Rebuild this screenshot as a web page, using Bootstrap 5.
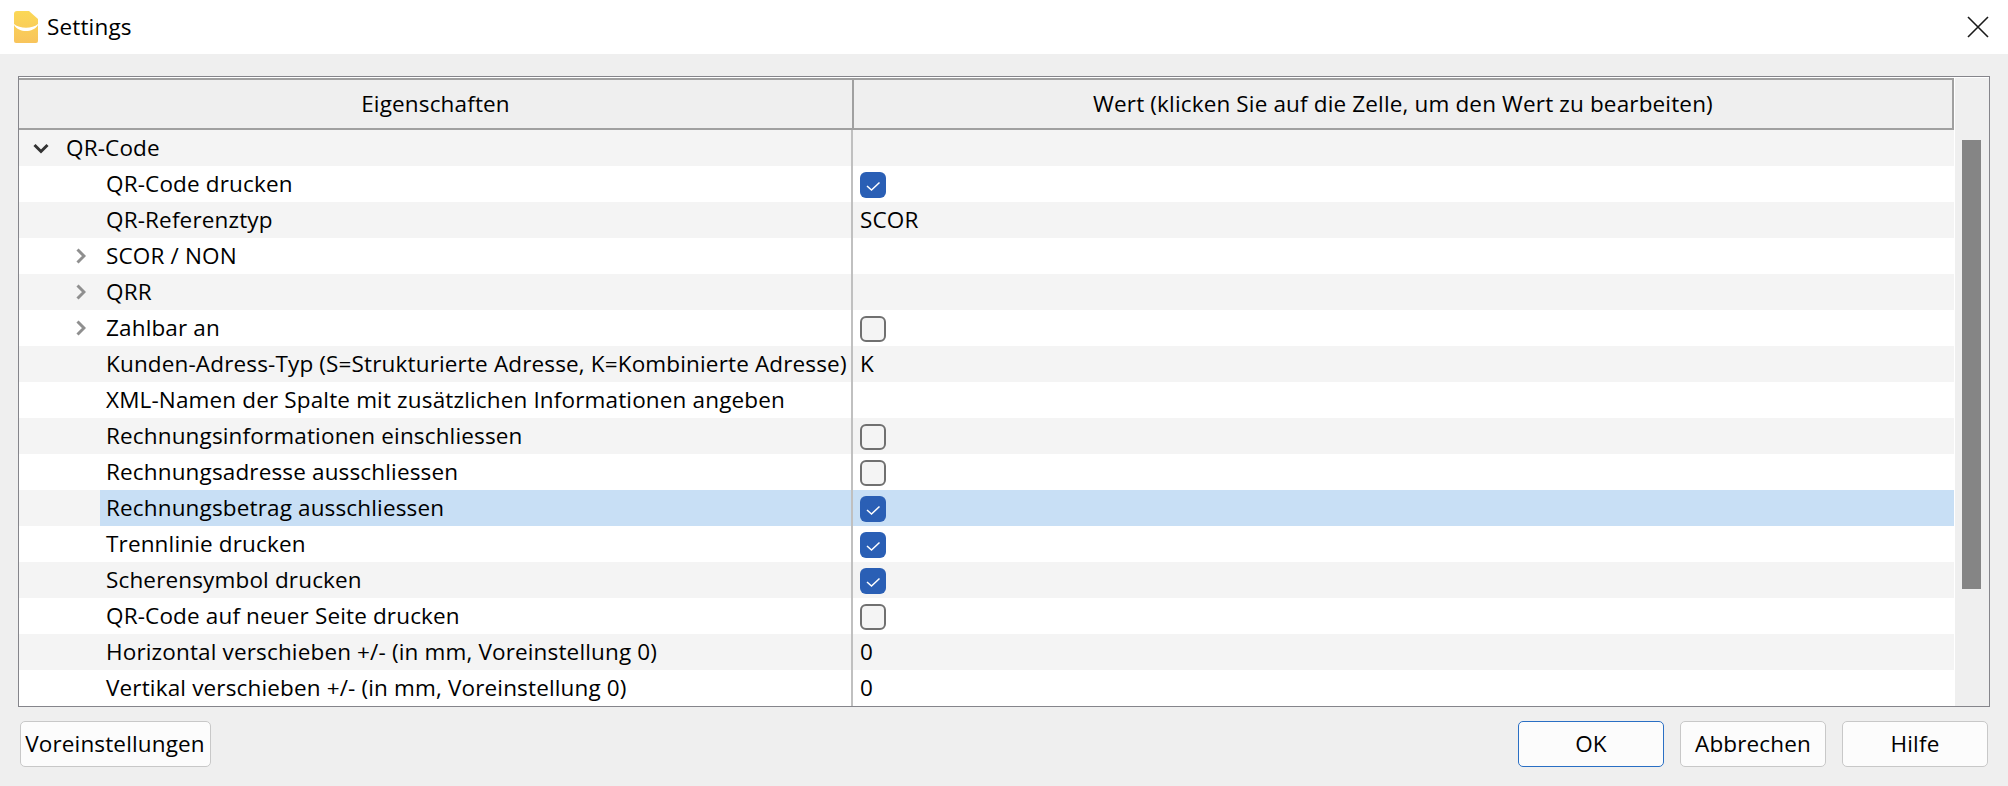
<!DOCTYPE html>
<html lang="de"><head><meta charset="utf-8"><title>Settings</title>
<link href="https://cdn.jsdelivr.net/npm/bootstrap@5.3.0/dist/css/bootstrap.min.css" rel="stylesheet">
<style>
html,body{height:786px;overflow:hidden}
body{background:#efefef;font-family:"Open Sans","Noto Sans","Liberation Sans",sans-serif;font-size:22.5px;letter-spacing:.15px;color:#000}
.titlebar{height:54px;background:#fff;padding-left:14px}
.titlebar .ttl{margin-left:9px}
.closex{margin-right:19px}
.frame{margin:22px 18px 0;height:631px;border:1px solid #85858b;padding-top:1px;background:#fff}
.mainpart{width:1935px}
.headrow{height:52px;background:#efefef;border:solid #a0a0a0;border-width:2px 2px 2px 0}
.hcell1{width:835px;border-right:2px solid #a0a0a0}
.datarow{height:36px;line-height:35px;background:#fff}
.datarow.alt{background:#f4f4f4}
.lab{width:832px;flex:none;white-space:nowrap}
.val{flex:1;border-left:2px solid #c0c0c0;padding-left:7px;height:36px}
.twisty{width:47px;flex:none}
.twisty.deep{width:87px}
.twisty.l0{width:47px;padding-left:14px}
.twisty.l1{width:87px;padding-left:57px}
.twisty svg{display:block;margin-top:13px}
.twisty.l1 svg{margin-top:10px}
.sel .labtext{background:#c8dff5;flex:1;padding-left:6px}
.sel{background:#f4f4f4}
.sel .val{background:#c8dff5}
.sel .twisty.deep{width:81px}
.cbx{width:26px;height:26px;border-radius:6px;display:block;margin-top:6px}
.cbx svg{display:block}
.cbx.on{background:#2a5fb5}
.cbx.off{background:#f4f4f4;border:2px solid #707070}
.scrollcol{flex:1;background:#efefef;margin-left:1px;padding:62px 8px 0 7px}
.thumb{height:449px;background:#858585}
.footrow{margin:14px 20px 0 19.5px}
.wbtn{height:46px;width:146px;background:#fcfcfc;border:1px solid #c8c8c8;border-radius:5px;padding:0;font-size:22.5px;letter-spacing:.15px;color:#000;line-height:1}
.wbtn.wide{width:191px}
.wbtn.dflt{border:1.5px solid #2a6fc4}
</style></head>
<body>
<div class="titlebar d-flex align-items-center justify-content-between">
  <div class="d-flex align-items-center">
    <svg width="24" height="32" viewBox="0 0 24 32"><defs><linearGradient id="g" x1="0" y1="0" x2="0" y2="1"><stop offset="0" stop-color="#fbd856"/><stop offset="1" stop-color="#f8c45c"/></linearGradient></defs><path d="M3 0h12l9 8v22a2 2 0 0 1-2 2H2a2 2 0 0 1-2-2V3a3 3 0 0 1 3-3z" fill="url(#g)"/><path d="M0 13c6 5 18 5 24 0v1c-5 8-19 8-24 0z" fill="#fff"/></svg>
    <span class="ttl">Settings</span>
  </div>
  <svg class="closex" width="22" height="22" viewBox="0 0 22 22"><path d="M1 1l20 20M21 1L1 21" stroke="#1a1a1a" stroke-width="1.6" fill="none"/></svg>
</div>
<div class="frame d-flex">
  <div class="mainpart">
    <div class="headrow d-flex text-center">
      <div class="hcell1 d-flex align-items-center justify-content-center">Eigenschaften</div>
      <div class="flex-grow-1 d-flex align-items-center justify-content-center">Wert (klicken Sie auf die Zelle, um den Wert zu bearbeiten)</div>
    </div>
    <div class="datarow alt d-flex"><div class="lab d-flex"><div class="twisty l0"><svg width="16" height="11" viewBox="0 0 16 11"><path d="M1.500 2L8 8.500 14.500 2" fill="none" stroke="#333" stroke-width="3"/></svg></div><div>QR-Code</div></div><div class="val"></div></div>
    <div class="datarow d-flex"><div class="lab d-flex"><div class="twisty deep"></div><div>QR-Code drucken</div></div><div class="val"><span class="cbx on"><svg width="26" height="26" viewBox="0 0 26 26"><path d="M7 14l4.500 4 8-7.500" fill="none" stroke="#fff" stroke-width="1.500"/></svg></span></div></div>
    <div class="datarow alt d-flex"><div class="lab d-flex"><div class="twisty deep"></div><div>QR-Referenztyp</div></div><div class="val">SCOR</div></div>
    <div class="datarow d-flex"><div class="lab d-flex"><div class="twisty l1"><svg width="10" height="16" viewBox="0 0 10 16"><path d="M1.500 1.500L8 8l-6.500 6.500" fill="none" stroke="#8f8f8f" stroke-width="3"/></svg></div><div>SCOR / NON</div></div><div class="val"></div></div>
    <div class="datarow alt d-flex"><div class="lab d-flex"><div class="twisty l1"><svg width="10" height="16" viewBox="0 0 10 16"><path d="M1.500 1.500L8 8l-6.500 6.500" fill="none" stroke="#8f8f8f" stroke-width="3"/></svg></div><div>QRR</div></div><div class="val"></div></div>
    <div class="datarow d-flex"><div class="lab d-flex"><div class="twisty l1"><svg width="10" height="16" viewBox="0 0 10 16"><path d="M1.500 1.500L8 8l-6.500 6.500" fill="none" stroke="#8f8f8f" stroke-width="3"/></svg></div><div>Zahlbar an</div></div><div class="val"><span class="cbx off"></span></div></div>
    <div class="datarow alt d-flex"><div class="lab d-flex"><div class="twisty deep"></div><div>Kunden-Adress-Typ (S=Strukturierte Adresse, K=Kombinierte Adresse)</div></div><div class="val">K</div></div>
    <div class="datarow d-flex"><div class="lab d-flex"><div class="twisty deep"></div><div>XML-Namen der Spalte mit zusätzlichen Informationen angeben</div></div><div class="val"></div></div>
    <div class="datarow alt d-flex"><div class="lab d-flex"><div class="twisty deep"></div><div>Rechnungsinformationen einschliessen</div></div><div class="val"><span class="cbx off"></span></div></div>
    <div class="datarow d-flex"><div class="lab d-flex"><div class="twisty deep"></div><div>Rechnungsadresse ausschliessen</div></div><div class="val"><span class="cbx off"></span></div></div>
    <div class="datarow sel d-flex"><div class="lab d-flex"><div class="twisty deep"></div><div class="labtext">Rechnungsbetrag ausschliessen</div></div><div class="val"><span class="cbx on"><svg width="26" height="26" viewBox="0 0 26 26"><path d="M7 14l4.500 4 8-7.500" fill="none" stroke="#fff" stroke-width="1.500"/></svg></span></div></div>
    <div class="datarow d-flex"><div class="lab d-flex"><div class="twisty deep"></div><div>Trennlinie drucken</div></div><div class="val"><span class="cbx on"><svg width="26" height="26" viewBox="0 0 26 26"><path d="M7 14l4.500 4 8-7.500" fill="none" stroke="#fff" stroke-width="1.500"/></svg></span></div></div>
    <div class="datarow alt d-flex"><div class="lab d-flex"><div class="twisty deep"></div><div>Scherensymbol drucken</div></div><div class="val"><span class="cbx on"><svg width="26" height="26" viewBox="0 0 26 26"><path d="M7 14l4.500 4 8-7.500" fill="none" stroke="#fff" stroke-width="1.500"/></svg></span></div></div>
    <div class="datarow d-flex"><div class="lab d-flex"><div class="twisty deep"></div><div>QR-Code auf neuer Seite drucken</div></div><div class="val"><span class="cbx off"></span></div></div>
    <div class="datarow alt d-flex"><div class="lab d-flex"><div class="twisty deep"></div><div>Horizontal verschieben +/- (in mm, Voreinstellung 0)</div></div><div class="val">0</div></div>
    <div class="datarow d-flex"><div class="lab d-flex"><div class="twisty deep"></div><div>Vertikal verschieben +/- (in mm, Voreinstellung 0)</div></div><div class="val">0</div></div>
  </div>
  <div class="scrollcol"><div class="thumb"></div></div>
</div>
<div class="footrow d-flex justify-content-between">
  <button type="button" class="btn wbtn wide">Voreinstellungen</button>
  <div class="d-flex gap-3">
    <button type="button" class="btn wbtn dflt">OK</button>
    <button type="button" class="btn wbtn">Abbrechen</button>
    <button type="button" class="btn wbtn">Hilfe</button>
  </div>
</div>
<script src="https://cdn.jsdelivr.net/npm/bootstrap@5.3.0/dist/js/bootstrap.bundle.min.js"></script>
</body></html>
